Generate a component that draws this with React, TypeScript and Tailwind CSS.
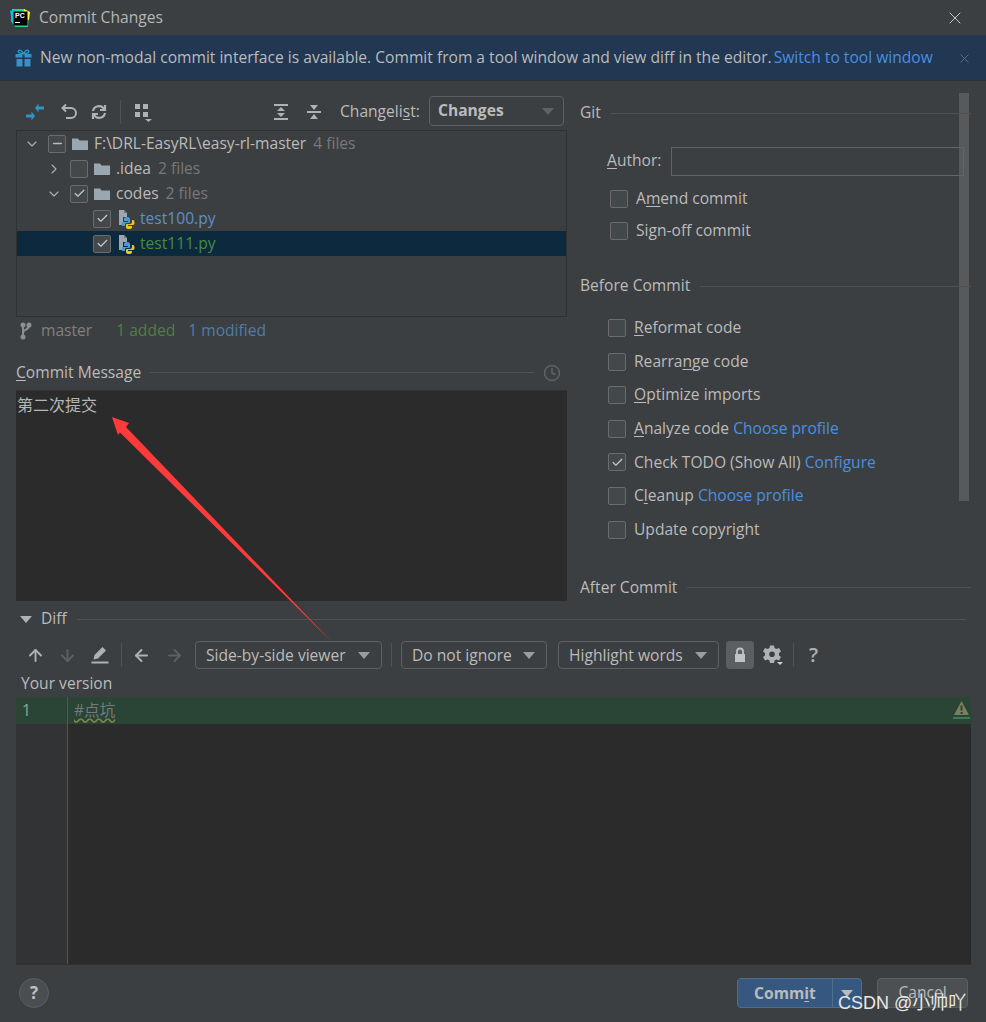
import { ArrowDown, ArrowLeft, ArrowRight, ArrowUp, Check, ChevronDown, ChevronRight, Clock, Minus, X } from 'lucide-react'
import type { ReactNode } from 'react'

const FONT = '"Open Sans", "Noto Sans", "Noto Sans CJK SC", sans-serif'

function Caret({ className = 'border-t-[#9a9da0]' }: { className?: string }) {
  return <span className={`w-0 h-0 border-x-[6px] border-x-transparent border-t-[7px] ${className}`} />
}

function PcLogo() {
  return (
    <svg width="20" height="20" viewBox="0 0 20 20" className="shrink-0">
      <path d="M2 1 L14 1 L19 7 L18 19 L5 19 L1 13 Z" fill="#21d789" />
      <path d="M14 1 L20 4 L19 12 L12 10 Z" fill="#fcf84a" />
      <path d="M0 3 L6 1 L8 12 L3 17 Z" fill="#07c3f2" />
      <rect x="3.500" y="3.500" width="14" height="14" fill="#000" />
      <text x="5" y="10" fontSize="7" fontWeight="700" fill="#fff" fontFamily="Liberation Sans">PC</text>
      <rect x="5" y="14" width="5" height="1" fill="#fff" />
    </svg>
  )
}

function GiftIcon() {
  return (
    <svg width="17" height="18" viewBox="0 0 17 18" fill="#3592c4" className="shrink-0">
      <path d="M0.500 5 H7.500 V8.500 H0.500 Z M9.500 5 H16.500 V8.500 H9.500 Z" />
      <path d="M1.500 10 H7.500 V17.500 H1.500 Z M9.500 10 H15.500 V17.500 H9.500 Z" />
      <path d="M8.500 4.500 C6 0 2.500 0.500 3.500 3 C4 4.300 6.500 4.500 8.500 4.500 C10.500 4.500 13 4.300 13.500 3 C14.500 0.500 11 0 8.500 4.500 Z" fill="none" stroke="#3592c4" strokeWidth="1.400" />
    </svg>
  )
}

function Fold() {
  return (
    <svg width="18" height="18" viewBox="0 0 18 18" className="shrink-0">
      <path d="M1 3.500 V15 H17 V5.500 H8.500 L7 3.500 Z" fill="#9aa7b0" />
    </svg>
  )
}

function PyFile() {
  return (
    <svg width="17" height="20" viewBox="0 0 17 20" className="shrink-0">
      <path d="M1 1 H6 L9 4 V8 H5 V16 H1 Z" fill="#9aa7b0" />
      <path d="M6 1 V4 H9 Z" fill="#6e777d" />
      <path d="M9 8 Q6 8 6 10 V12 H10 V13 H5 Q3.500 13 3.500 15 Q3.500 17 5 17 H7 V15 Q7 14 9 14 H11 Q12 14 12 13 V10 Q12 8 9 8 Z" fill="#4b9ad4" />
      <path d="M14 11 V13 Q14 15 12 15 H9 Q8 15 8 16 V18 Q8 20 11 20 Q14 20 14 18 V17 H10 V16 H15 Q16.500 16 16.500 14 Q16.500 11 15 11 Z" fill="#f2c320" />
    </svg>
  )
}

function Box({ checked, dash }: { checked?: boolean; dash?: boolean }) {
  return (
    <span className="w-[18px] h-[18px] shrink-0 rounded-[2px] border border-[#6b6b6b] bg-[#43494a] flex items-center justify-center">
      {checked && <Check size={13} strokeWidth={2.2} className="text-[#c4c6c8]" />}
      {dash && <Minus size={13} strokeWidth={3} className="text-[#b8babc]" />}
    </span>
  )
}

function TreeRow({ indent, arrow, children, selected }: { indent: string; arrow?: 'down' | 'right'; children: ReactNode; selected?: boolean }) {
  return (
    <div className={`h-[25px] flex items-center ${indent} ${selected ? 'bg-[#0d293e]' : ''}`}>
      {arrow === 'down' && <ChevronDown size={16} strokeWidth={1.6} className="text-[#afb1b3] mr-[8px] shrink-0" />}
      {arrow === 'right' && <ChevronRight size={16} strokeWidth={1.6} className="text-[#afb1b3] mr-[8px] shrink-0" />}
      {children}
    </div>
  )
}

function SectionTitle({ children, className = '' }: { children: ReactNode; className?: string }) {
  return (
    <div className={`flex items-center gap-[10px] ${className}`}>
      <span className="shrink-0">{children}</span>
      <span className="flex-1 h-px bg-[#515151]" />
    </div>
  )
}

function Option({ children, checked }: { children: ReactNode; checked?: boolean }) {
  return (
    <div className="flex items-center gap-[8px] h-[24px]">
      <Box checked={checked} />
      <span className="whitespace-nowrap">{children}</span>
    </div>
  )
}

function Select({ label, className }: { label: string; className: string }) {
  return (
    <div className={`${className} h-[28px] shrink-0 rounded-[4px] border border-[#5e6060] flex items-center justify-between pl-[10px] pr-[11px] pt-[1px] whitespace-nowrap`}>
      {label}
      <Caret />
    </div>
  )
}

function Sep({ className }: { className: string }) {
  return <span className={`${className} w-px h-[24px] bg-[#515151] shrink-0`} />
}

export default function App() {
  return (
    <div className="relative w-[986px] h-[1022px] overflow-hidden bg-[#3c3f41] text-[#bbbbbb] text-[15.6px] flex flex-col" style={{ fontFamily: FONT }}>
      <div className="h-[35px] shrink-0 flex items-center pt-[1px] pl-[10px] pr-[21px] text-[#b4b6b8]">
        <PcLogo />
        <span className="ml-[9px]">Commit Changes</span>
        <X size={20} strokeWidth={1.2} className="ml-auto text-[#c8c8c8]" />
      </div>

      <div className="h-[46px] shrink-0 bg-[#213752] border-b border-[#323232] flex items-center pt-[1px] pl-[15px] pr-[14px] whitespace-nowrap">
        <GiftIcon />
        <span className="ml-[8px]">New non-modal commit interface is available. Commit from a tool window and view diff in the editor.</span>
        <span className="ml-[2px] text-[#4a8fe0]">Switch to tool window</span>
        <X size={15} strokeWidth={1.4} className="ml-auto text-[#5f7589]" />
      </div>

      <div className="h-[526px] shrink-0 flex">
        <div className="w-[551px] ml-[16px] shrink-0 flex flex-col">
          <div className="h-[49px] pt-[13px] flex items-center pl-[10px]">
            <svg width="18" height="18" viewBox="0 0 18 18" fill="#3592c4" className="shrink-0">
              <path d="M9 5 L12.500 0.500 V3.500 H18 V6.500 H12.500 V9.500 Z" />
              <path d="M9 13 L5.500 8.500 V11.500 H0 V14.500 H5.500 V17.500 Z" />
            </svg>
            <svg width="18" height="18" viewBox="0 0 18 18" fill="none" stroke="#afb1b3" strokeWidth="2" className="ml-[16px] shrink-0">
              <path d="M3 5 H11 A5 5 0 0 1 11 15 H6" />
              <path d="M6 1.500 L2.500 5 L6 8.500" />
            </svg>
            <svg width="18" height="18" viewBox="0 0 18 18" fill="none" stroke="#afb1b3" strokeWidth="2.200" className="ml-[12px] shrink-0">
              <path d="M3 8 A6 6 0 0 1 14 6" />
              <path d="M15 10 A6 6 0 0 1 4 12" />
              <path d="M15 2 V7 H10 M3 16 V11 H8" />
            </svg>
            <Sep className="ml-[12px]" />
            <svg width="20" height="20" viewBox="0 0 20 20" fill="#afb1b3" className="ml-[13px] shrink-0">
              <rect x="1" y="2" width="5" height="5" />
              <rect x="9" y="2" width="5" height="5" />
              <rect x="1" y="10" width="5" height="5" />
              <rect x="9" y="10" width="5" height="5" />
              <path d="M11 17 H18 L14.500 20 Z" />
            </svg>
            <svg width="16" height="18" viewBox="0 0 16 18" fill="#afb1b3" className="ml-[119px] shrink-0">
              <rect x="1" y="1" width="14" height="2" />
              <rect x="1" y="15" width="14" height="2" />
              <path d="M8 4 L12 8 H4 Z M8 14 L12 10 H4 Z" />
            </svg>
            <svg width="16" height="18" viewBox="0 0 16 18" fill="#afb1b3" className="ml-[17px] shrink-0">
              <rect x="1" y="8" width="14" height="2" />
              <path d="M8 7 L12 2 H4 Z M8 11 L12 16 H4 Z" />
            </svg>
            <span className="ml-[18px] whitespace-nowrap">Changeli<span className="underline underline-offset-2">s</span>t:</span>
            <div className="ml-auto w-[135px] h-[30px] rounded-[4px] border border-[#5e6060] flex items-center justify-between pl-[8px] pr-[9px] font-bold text-[#bbbbbb] -translate-y-[1px] -translate-x-[3px]">
              Changes
              <Caret className="border-t-[#5f6264]" />
            </div>
          </div>

          <div className="h-[187px] shrink-0 border border-[#2f3233]">
            <TreeRow indent="pl-[7px]" arrow="down">
              <Box dash />
              <span className="ml-[5px]"><Fold /></span>
              <span className="ml-[5px]">F:\DRL-EasyRL\easy-rl-master</span>
              <span className="ml-[7px] text-[#787878]">4 files</span>
            </TreeRow>
            <TreeRow indent="pl-[29px]" arrow="right">
              <Box />
              <span className="ml-[5px]"><Fold /></span>
              <span className="ml-[5px]">.idea</span>
              <span className="ml-[7px] text-[#787878]">2 files</span>
            </TreeRow>
            <TreeRow indent="pl-[29px]" arrow="down">
              <Box checked />
              <span className="ml-[5px]"><Fold /></span>
              <span className="ml-[5px]">codes</span>
              <span className="ml-[7px] text-[#787878]">2 files</span>
            </TreeRow>
            <TreeRow indent="pl-[76px]">
              <Box checked />
              <span className="ml-[7px]"><PyFile /></span>
              <span className="ml-[5px] text-[#5b8fc4]">test100.py</span>
            </TreeRow>
            <TreeRow indent="pl-[76px]" selected>
              <Box checked />
              <span className="ml-[7px]"><PyFile /></span>
              <span className="ml-[5px] text-[#478a3e]">test111.py</span>
            </TreeRow>
          </div>

          <div className="h-[27px] flex items-center pl-[2px]">
            <svg width="16" height="18" viewBox="0 0 16 18" fill="none" stroke="#8c8f91" strokeWidth="2" className="shrink-0">
              <path d="M5 3 V15 M5 11 C5 7 11 9 11 3" />
              <circle cx="5" cy="15" r="1.500" fill="#8c8f91" />
              <circle cx="5" cy="3" r="1.500" fill="#8c8f91" />
              <circle cx="11" cy="3" r="1.500" fill="#8c8f91" />
            </svg>
            <span className="ml-[7px] text-[#808080]">master</span>
            <span className="ml-[24px] text-[#4e7f43]">1 added</span>
            <span className="ml-[13px] text-[#4f7da8]">1 modified</span>
          </div>

          <div className="h-[46px] pt-[11px] flex items-center gap-[8px]">
            <span className="whitespace-nowrap"><span className="underline underline-offset-2">C</span>ommit Message</span>
            <span className="flex-1 h-px bg-[#515151] ml-[1px]" />
            <Clock size={18} strokeWidth={2} className="text-[#5f6365] ml-[1px] mr-[6px]" />
          </div>

          <div className="h-[211px] shrink-0 bg-[#2b2b2b] pl-[1px] text-[16px] text-[#b4b6b8] leading-[28px] border-t border-[#323232]">
            第二次提交
          </div>
        </div>

        {/* sits above the scrollbar: the section lines and the author field show over it */}
        <div className="relative z-10 flex-1 ml-[13px] flex flex-col pt-[20px] pr-[15px]">
          <SectionTitle className="h-[24px]">Git</SectionTitle>
          <div className="h-[28px] mt-[22px] flex items-center pl-[27px]">
            <span className="whitespace-nowrap"><span className="underline underline-offset-2">A</span>uthor:</span>
            <span className="ml-auto mr-[7px] w-[293px] h-[29px] border border-[#646464]" />
          </div>
          <div className="mt-[12px] pl-[30px] flex flex-col gap-[8px]">
            <Option>A<span className="underline underline-offset-2">m</span>end commit</Option>
            <Option>Si<span className="underline underline-offset-2">g</span>n-off commit</Option>
          </div>
          <SectionTitle className="h-[24px] mt-[31px]">Before Commit</SectionTitle>
          <div className="mt-[18px] pl-[28px] flex flex-col gap-[9.6px]">
            <Option><span className="underline underline-offset-2">R</span>eformat code</Option>
            <Option>Rearra<span className="underline underline-offset-2">n</span>ge code</Option>
            <Option><span className="underline underline-offset-2">O</span>ptimize imports</Option>
            <Option><span className="underline underline-offset-2">A</span>nalyze code <span className="text-[#4a8fe0]">Choose profile</span></Option>
            <Option checked>Check TODO (Show All) <span className="text-[#4a8fe0]">Configure</span></Option>
            <Option>C<span className="underline underline-offset-2">l</span>eanup <span className="text-[#4a8fe0]">Choose profile</span></Option>
            <Option>Update copyright</Option>
          </div>
          <SectionTitle className="h-[24px] mt-[34px]">After Commit</SectionTitle>
        </div>
      </div>

      <div className="shrink-0 pl-[16px] pr-[15px] flex flex-col flex-1">
        <div className="h-[24px] flex items-center pr-[6px]">
          <Caret className="border-t-[#afb1b3] ml-[4px]" />
          <span className="ml-[9px]">Diff</span>
          <span className="ml-[10px] flex-1 h-px bg-[#515151]" />
        </div>
        <div className="h-[28px] mt-[10px] flex items-center pl-[10px] whitespace-nowrap">
          <ArrowUp size={19} strokeWidth={2.4} className="text-[#afb1b3] shrink-0" />
          <ArrowDown size={19} strokeWidth={2.4} className="ml-[13px] text-[#5d6062] shrink-0" />
          <svg width="18" height="18" viewBox="0 0 18 18" fill="#afb1b3" className="ml-[14px] shrink-0">
            <path d="M11.500 1 L15 4.500 L7 12.500 L2.500 13.500 L3.500 9 Z" />
            <rect x="0.500" y="15.500" width="17" height="2" />
          </svg>
          <Sep className="ml-[12px]" />
          <ArrowLeft size={19} strokeWidth={2.4} className="ml-[10px] text-[#afb1b3] shrink-0" />
          <ArrowRight size={19} strokeWidth={2.4} className="ml-[14px] text-[#5d6062] shrink-0" />
          <Select label="Side-by-side viewer" className="ml-[11px] w-[187px]" />
          <Sep className="ml-[9px]" />
          <Select label="Do not ignore" className="ml-[9px] w-[146px]" />
          <Select label="Highlight words" className="ml-[11px] w-[161px]" />
          <span className="ml-[7px] w-[28px] h-[28px] rounded-[4px] bg-[#5b5f61] flex items-center justify-center shrink-0">
            <svg width="14" height="16" viewBox="0 0 14 16" fill="#c0c2c4">
              <path d="M2 7 H12 V15 H2 Z" />
              <path d="M4 7 V4.500 A3 3 0 0 1 10 4.500 V7" fill="none" stroke="#c0c2c4" strokeWidth="1.800" />
            </svg>
          </span>
          <svg width="22" height="22" viewBox="0 0 22 22" className="ml-[8px] shrink-0" fill="#afb1b3">
            <path fillRule="evenodd" d="M8 1.500 H12 L12.500 4 L14.500 5 L17 4 L19 7.500 L17 9 V11.500 L19 13 L17 16.500 L14.500 15.500 L12.500 16.500 L12 19 H8 L7.500 16.500 L5.500 15.500 L3 16.500 L1 13 L3 11.500 V9 L1 7.500 L3 4 L5.500 5 L7.500 4 Z M10 7.500 A2.800 2.800 0 1 0 10 13.100 A2.800 2.800 0 1 0 10 7.500 Z" />
            <path d="M15 18 H21 L18 21 Z" fill="#d0d0d0" />
          </svg>
          <Sep className="ml-[9px]" />
          <span className="ml-[15px] text-[20px] font-semibold text-[#afb1b3] leading-none">?</span>
        </div>
        <div className="h-[28px] flex items-center pt-[2px] pl-[5px]">Your version</div>

        <div className="relative h-[267px] w-[955px] shrink-0 bg-[#2b2b2b] flex">
          <div className="w-[52px] h-full bg-[#313335] border-r border-[#555555] shrink-0" />
          {/* green changed line goes over gutter and editor */}
          <div className="absolute left-0 top-0 w-full h-[27px] bg-[#2a4436] flex items-center">
            <span className="w-[52px] pl-[6px] text-[#8fa59a] border-r border-[#555555] h-full flex items-center">1</span>
            <span className="ml-[6px] text-[#777a7a] underline decoration-wavy decoration-[#7d8a4a] underline-offset-2">#点坑</span>
            <span className="ml-auto mr-[2px] relative w-[15px] h-[20px] flex flex-col items-center">
              <svg width="15" height="14" viewBox="0 0 15 14" className="shrink-0">
                <path d="M7.500 0 L15 14 H0 Z" fill="#7c7c5e" />
                <rect x="6.500" y="4.500" width="2" height="5" fill="#2a4436" />
                <rect x="6.500" y="11" width="2" height="2" fill="#2a4436" />
              </svg>
              <span className="w-[17px] h-[2px] mt-[2px] bg-[#3f7a58] shrink-0" />
            </span>
          </div>
        </div>

        <div className="flex items-start pt-[13px] pl-[3px] border-t border-[#323232]">
          <span className="w-[30px] h-[30px] rounded-full bg-[#4a4e50] border border-[#5a5e60] flex items-center justify-center font-bold text-[#c0c0c0] text-[17px]">?</span>
          <div className="ml-auto mr-[3px] flex items-center gap-[15px]">
            <div className="w-[125px] h-[30px] rounded-[4px] bg-[#365880] border border-[#4c708c] flex items-center font-bold text-[#bbbbbb]">
              <span className="flex-1 text-center pt-[1px]">Comm<span className="underline underline-offset-2">i</span>t</span>
              <span className="w-[29px] h-full border-l border-[#4c708c] flex items-center justify-center"><Caret className="border-t-[#bbbbbb]" /></span>
            </div>
            <div className="w-[91px] h-[30px] rounded-[4px] bg-[#4c5052] border border-[#5e6060] flex items-center justify-center text-[#bbbbbb]">Cancel</div>
          </div>
        </div>
      </div>

      {/* scrollbar, annotation arrow and watermark lie over the page */}
      <div className="absolute left-[959px] top-[93px] w-[10px] h-[408px] bg-[#5a5c5e]/90" />
      <svg className="absolute z-20 left-0 top-0 pointer-events-none" width="986" height="1022">
        <polygon points="112,417 129,423 126,427 331,641 120,432.500 118,435" fill="#ff3a3a" />
      </svg>
      <span className="absolute z-20 left-[838px] top-[990px] text-[18px] text-[#e8e8e8]" style={{ fontFamily: '"Liberation Sans", "Noto Sans CJK SC", sans-serif' }}>CSDN @小帅吖</span>
    </div>
  )
}
